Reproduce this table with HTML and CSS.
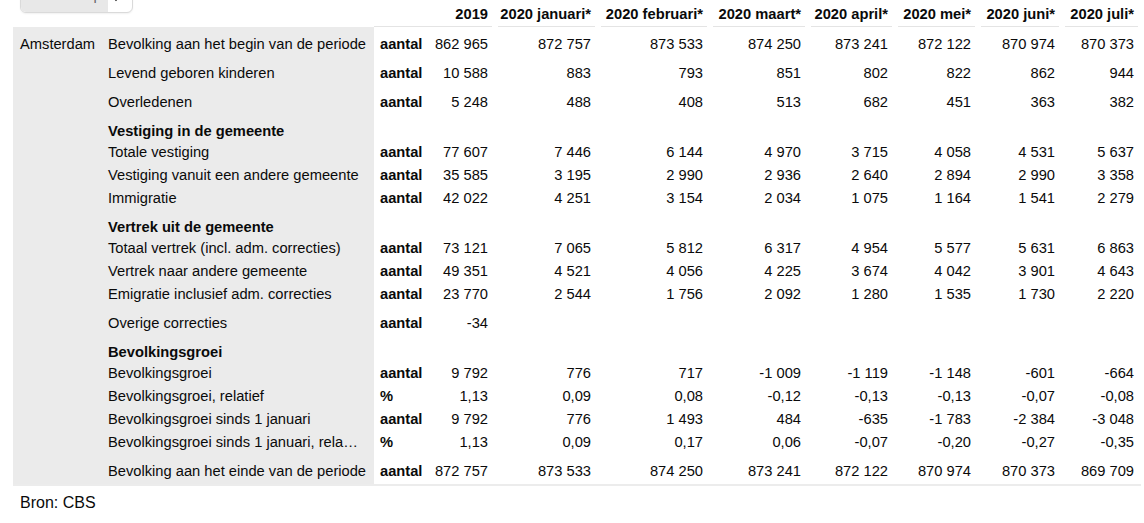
FILE: index.html
```html
<!DOCTYPE html>
<html lang="nl">
<head>
<meta charset="utf-8">
<title>Bevolkingsontwikkeling Amsterdam</title>
<link rel="stylesheet" href="styles.css">
</head>
<body>
<div class="table-wrap">
<table class="data">
  <colgroup>
    <col class="c-name"><col class="c-label"><col class="c-unit"><col class="c-2019">
    <col class="c-jan"><col class="c-feb"><col class="c-mrt"><col class="c-apr">
    <col class="c-mei"><col class="c-jun"><col class="c-jul">
  </colgroup>
  <thead>
    <tr>
      <th colspan="2" class="th-picker">
        <div class="picker">
          <span class="picker-label">Onderwerp</span>
          <span class="picker-icon">
            <svg width="10" height="14" viewBox="0 0 10 14"><path d="M5 1v11M1.5 8.5L5 12l3.5-3.5" fill="none" stroke="#222" stroke-width="1.6"/></svg>
          </span>
        </div>
      </th>
      <th><div class="hd hd-unit"></div></th>
      <th><div class="hd hd-first">2019</div></th>
      <th><div class="hd">2020 januari*</div></th>
      <th><div class="hd">2020 februari*</div></th>
      <th><div class="hd">2020 maart*</div></th>
      <th><div class="hd">2020 april*</div></th>
      <th><div class="hd">2020 mei*</div></th>
      <th><div class="hd">2020 juni*</div></th>
      <th><div class="hd">2020 juli*</div></th>
    </tr>
  </thead>
  <tbody>
    <tr class="single first">
      <td class="name">Amsterdam</td><td class="label">Bevolking aan het begin van de periode</td><td class="unit">aantal</td>
      <td class="num">862 965</td><td class="num">872 757</td><td class="num">873 533</td><td class="num">874 250</td><td class="num">873 241</td><td class="num">872 122</td><td class="num">870 974</td><td class="num">870 373</td>
    </tr>
    <tr class="single">
      <td class="name"></td><td class="label">Levend geboren kinderen</td><td class="unit">aantal</td>
      <td class="num">10 588</td><td class="num">883</td><td class="num">793</td><td class="num">851</td><td class="num">802</td><td class="num">822</td><td class="num">862</td><td class="num">944</td>
    </tr>
    <tr class="single">
      <td class="name"></td><td class="label">Overledenen</td><td class="unit">aantal</td>
      <td class="num">5 248</td><td class="num">488</td><td class="num">408</td><td class="num">513</td><td class="num">682</td><td class="num">451</td><td class="num">363</td><td class="num">382</td>
    </tr>
    <tr class="ghead">
      <td class="name"></td><td class="label group">Vestiging in de gemeente</td><td class="unit"></td>
      <td class="num"></td><td class="num"></td><td class="num"></td><td class="num"></td><td class="num"></td><td class="num"></td><td class="num"></td><td class="num"></td>
    </tr>
    <tr>
      <td class="name"></td><td class="label">Totale vestiging</td><td class="unit">aantal</td>
      <td class="num">77 607</td><td class="num">7 446</td><td class="num">6 144</td><td class="num">4 970</td><td class="num">3 715</td><td class="num">4 058</td><td class="num">4 531</td><td class="num">5 637</td>
    </tr>
    <tr>
      <td class="name"></td><td class="label">Vestiging vanuit een andere gemeente</td><td class="unit">aantal</td>
      <td class="num">35 585</td><td class="num">3 195</td><td class="num">2 990</td><td class="num">2 936</td><td class="num">2 640</td><td class="num">2 894</td><td class="num">2 990</td><td class="num">3 358</td>
    </tr>
    <tr class="end">
      <td class="name"></td><td class="label">Immigratie</td><td class="unit">aantal</td>
      <td class="num">42 022</td><td class="num">4 251</td><td class="num">3 154</td><td class="num">2 034</td><td class="num">1 075</td><td class="num">1 164</td><td class="num">1 541</td><td class="num">2 279</td>
    </tr>
    <tr class="ghead">
      <td class="name"></td><td class="label group">Vertrek uit de gemeente</td><td class="unit"></td>
      <td class="num"></td><td class="num"></td><td class="num"></td><td class="num"></td><td class="num"></td><td class="num"></td><td class="num"></td><td class="num"></td>
    </tr>
    <tr>
      <td class="name"></td><td class="label">Totaal vertrek (incl. adm. correcties)</td><td class="unit">aantal</td>
      <td class="num">73 121</td><td class="num">7 065</td><td class="num">5 812</td><td class="num">6 317</td><td class="num">4 954</td><td class="num">5 577</td><td class="num">5 631</td><td class="num">6 863</td>
    </tr>
    <tr>
      <td class="name"></td><td class="label">Vertrek naar andere gemeente</td><td class="unit">aantal</td>
      <td class="num">49 351</td><td class="num">4 521</td><td class="num">4 056</td><td class="num">4 225</td><td class="num">3 674</td><td class="num">4 042</td><td class="num">3 901</td><td class="num">4 643</td>
    </tr>
    <tr class="end">
      <td class="name"></td><td class="label">Emigratie inclusief adm. correcties</td><td class="unit">aantal</td>
      <td class="num">23 770</td><td class="num">2 544</td><td class="num">1 756</td><td class="num">2 092</td><td class="num">1 280</td><td class="num">1 535</td><td class="num">1 730</td><td class="num">2 220</td>
    </tr>
    <tr class="single">
      <td class="name"></td><td class="label">Overige correcties</td><td class="unit">aantal</td>
      <td class="num">-34</td><td class="num"></td><td class="num"></td><td class="num"></td><td class="num"></td><td class="num"></td><td class="num"></td><td class="num"></td>
    </tr>
    <tr class="ghead">
      <td class="name"></td><td class="label group">Bevolkingsgroei</td><td class="unit"></td>
      <td class="num"></td><td class="num"></td><td class="num"></td><td class="num"></td><td class="num"></td><td class="num"></td><td class="num"></td><td class="num"></td>
    </tr>
    <tr>
      <td class="name"></td><td class="label">Bevolkingsgroei</td><td class="unit">aantal</td>
      <td class="num">9 792</td><td class="num">776</td><td class="num">717</td><td class="num">-1 009</td><td class="num">-1 119</td><td class="num">-1 148</td><td class="num">-601</td><td class="num">-664</td>
    </tr>
    <tr>
      <td class="name"></td><td class="label">Bevolkingsgroei, relatief</td><td class="unit">%</td>
      <td class="num">1,13</td><td class="num">0,09</td><td class="num">0,08</td><td class="num">-0,12</td><td class="num">-0,13</td><td class="num">-0,13</td><td class="num">-0,07</td><td class="num">-0,08</td>
    </tr>
    <tr>
      <td class="name"></td><td class="label">Bevolkingsgroei sinds 1 januari</td><td class="unit">aantal</td>
      <td class="num">9 792</td><td class="num">776</td><td class="num">1 493</td><td class="num">484</td><td class="num">-635</td><td class="num">-1 783</td><td class="num">-2 384</td><td class="num">-3 048</td>
    </tr>
    <tr class="end">
      <td class="name"></td><td class="label" title="Bevolkingsgroei sinds 1 januari, relatief">Bevolkingsgroei sinds 1 januari, rela…</td><td class="unit">%</td>
      <td class="num">1,13</td><td class="num">0,09</td><td class="num">0,17</td><td class="num">0,06</td><td class="num">-0,07</td><td class="num">-0,20</td><td class="num">-0,27</td><td class="num">-0,35</td>
    </tr>
    <tr class="single last">
      <td class="name"></td><td class="label">Bevolking aan het einde van de periode</td><td class="unit">aantal</td>
      <td class="num">872 757</td><td class="num">873 533</td><td class="num">874 250</td><td class="num">873 241</td><td class="num">872 122</td><td class="num">870 974</td><td class="num">870 373</td><td class="num">869 709</td>
    </tr>
  </tbody>
</table>
</div>
<p class="source">Bron: CBS</p>
</body>
</html>
```

FILE: styles.css
```css
html, body {
  margin: 0;
  padding: 0;
  background: #ffffff;
}

body {
  font-family: "Liberation Sans", Arial, sans-serif;
  font-size: 14.7px;
  color: #0a0a0a;
}

.table-wrap {
  width: 1128px;
  margin-left: 13px;
  border-bottom: 2px solid #ececec;
}

.data {
  width: 1128px;
  table-layout: fixed;
  border-collapse: collapse;
}

.c-name { width: 88px; }
.c-label { width: 273px; }
.c-unit { width: 56px; }
.c-2019 { width: 65px; }
.c-jan { width: 103px; }
.c-feb { width: 112px; }
.c-mrt { width: 98px; }
.c-apr { width: 87px; }
.c-mei { width: 83px; }
.c-jun { width: 84px; }
.c-jul { width: 79px; }

.data th {
  padding: 0;
  height: 27px;
  vertical-align: bottom;
  font-weight: bold;
}

.data .th-picker {
  vertical-align: top;
  text-align: left;
}

.hd {
  margin: 0 3px;
  padding: 0 4px 0 0;
  line-height: 23px;
  border-bottom: 1px solid #e4e4e4;
  text-align: right;
  white-space: nowrap;
}

.hd-unit {
  margin: 0;
  padding-right: 0;
}

.hd-first {
  margin-left: 0;
}

.picker {
  display: flex;
  box-sizing: border-box;
  width: 113px;
  height: 36px;
  margin: -23px 0 0 7px;
  border: 1px solid #dadada;
  border-radius: 6px;
  overflow: hidden;
  background: #ffffff;
  box-shadow: 0 1px 2px rgba(0, 0, 0, 0.06);
}

.picker-label {
  width: 87px;
  padding-left: 8px;
  box-sizing: border-box;
  background: #e8e8e8;
  color: #6a6a6a;
  font-weight: normal;
  line-height: 34px;
}

.picker-icon {
  flex: 1;
  display: flex;
  align-items: center;
  justify-content: center;
  padding-right: 8px;
}

.data td {
  padding: 0;
  line-height: 23px;
  white-space: nowrap;
  vertical-align: middle;
}

.data td.name {
  background: #ebebeb;
  padding-left: 7px;
}

.data td.label {
  background: #ebebeb;
  padding-left: 7px;
  padding-right: 2px;
  overflow: hidden;
  text-overflow: ellipsis;
}

.data td.group {
  font-weight: bold;
}

.data td.unit {
  font-weight: bold;
  padding-left: 6px;
}

.data td.num {
  text-align: right;
  padding-right: 7px;
}

.data tr.single td {
  padding-top: 3px;
  padding-bottom: 3px;
}

.data tr.first td {
  padding-top: 6px;
}

.data tr.last td {
  padding-bottom: 1px;
}

.data tr.ghead td {
  padding-top: 5px;
  line-height: 19px;
}

.data tr.end td {
  padding-bottom: 3px;
}

.source {
  margin: 0;
  padding: 6px 0 0 20px;
  font-size: 16px;
  line-height: 22px;
}
```
